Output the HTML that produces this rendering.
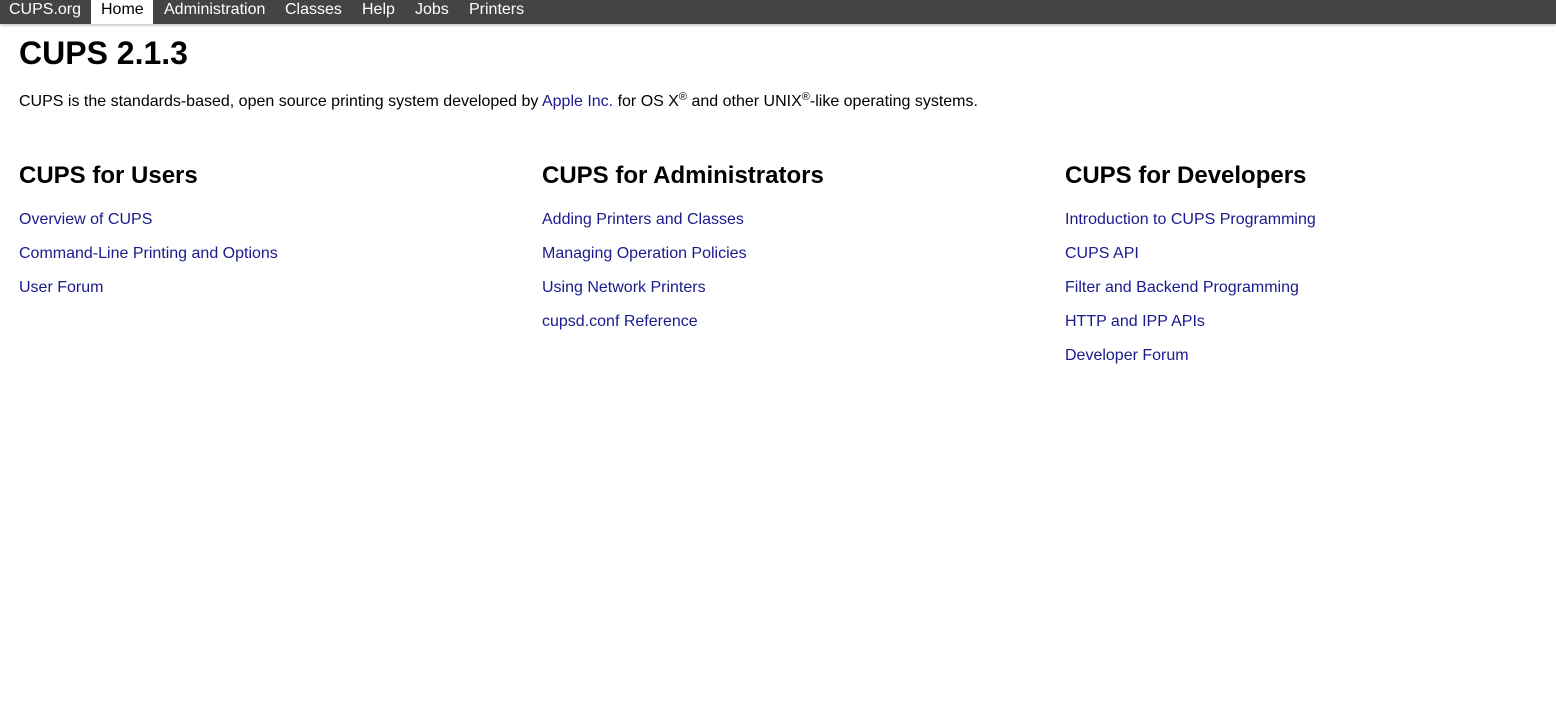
<!DOCTYPE html>
<html><head><style>
body{margin:0;font-family:"Liberation Sans",Arial,sans-serif;font-size:16px;color:#000;background:#fff}
.nav{height:24px;background:#444;box-shadow:0 1px 3px rgba(0,0,0,.3);position:relative}
.nav a{position:absolute;top:0;height:24px;line-height:20px;color:#fff;text-decoration:none;font-size:16px}
.nav a.on{background:#fff;color:#000;padding:0 10px}
h1{position:absolute;left:19px;top:35px;margin:0;font-size:32px;line-height:36px}
p{position:absolute;left:19px;top:92px;margin:0;line-height:20px}
a{color:#1a1a8c;text-decoration:none}
sup{font-size:11px;line-height:0;vertical-align:6px}
.col{position:absolute;top:162px;width:520px}
.col h2{margin:0 0 20px;font-size:24px;line-height:28px}
.col a{display:block;height:34px;line-height:20px}
</style></head><body>
<div class="nav">
<a style="left:9px">CUPS.org</a>
<a class="on" style="left:91px;width:42px">Home</a>
<a style="left:164px">Administration</a>
<a style="left:285px">Classes</a>
<a style="left:362px">Help</a>
<a style="left:415px">Jobs</a>
<a style="left:469px">Printers</a>
</div>
<h1>CUPS 2.1.3</h1>
<p>CUPS is the standards-based, open source printing system developed by <a>Apple Inc.</a> for OS X<sup>®</sup> and other UNIX<sup>®</sup>-like operating systems.</p>
<div class="col" style="left:19px"><h2>CUPS for Users</h2><a>Overview of CUPS</a><a>Command-Line Printing and Options</a><a>User Forum</a></div>
<div class="col" style="left:542px"><h2>CUPS for Administrators</h2><a>Adding Printers and Classes</a><a>Managing Operation Policies</a><a>Using Network Printers</a><a>cupsd.conf Reference</a></div>
<div class="col" style="left:1065px"><h2>CUPS for Developers</h2><a>Introduction to CUPS Programming</a><a>CUPS API</a><a>Filter and Backend Programming</a><a>HTTP and IPP APIs</a><a>Developer Forum</a></div>
</body></html>
